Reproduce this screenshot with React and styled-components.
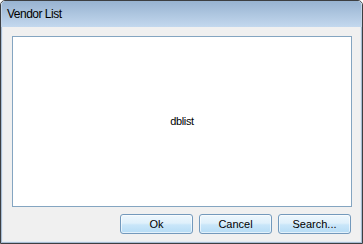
import React from 'react';
import styled, { createGlobalStyle } from 'styled-components';

const GlobalStyle = createGlobalStyle`
  html, body {
    margin: 0;
    padding: 0;
    background: #ffffff;
  }
  * {
    box-sizing: border-box;
  }
`;

const Window = styled.div`
  width: 363px;
  height: 244px;
  display: flex;
  flex-direction: column;
  border: 1px solid #3d3f42;
  border-radius: 5px 5px 0 0;
  overflow: hidden;
  font-family: "Liberation Sans", Arial, sans-serif;
  font-size: 11px;
  color: #000000;
`;

const TitleBar = styled.div`
  height: 26px;
  flex: none;
  display: flex;
  align-items: center;
  padding: 0 0 1px 5px;
  background: linear-gradient(#98b3d1, #c3d8ee);
  border-left: 1px solid #c2d4e8;
  border-right: 1px solid #c2d4e8;
  border-radius: 4px 4px 0 0;
`;

const Title = styled.span`
  font-size: 12px;
  letter-spacing: -0.5px;
`;

const Body = styled.div`
  flex: 1;
  display: flex;
  flex-direction: column;
  background: #f0f0f0;
  border: 1px solid #a8bdd4;
  border-top: none;
  box-shadow: inset 1px 0 0 #e4ebf3, inset -1px 0 0 #e4ebf3, inset 0 -1px 0 #e4ebf3;
  padding: 9px 9px 8px 10px;
`;

const ListPanel = styled.div`
  flex: 1;
  display: flex;
  align-items: center;
  justify-content: center;
  background: #ffffff;
  border: 1px solid #84a5c1;
  padding-bottom: 1px;
`;

const ListLabel = styled.span`
  font-size: 11px;
  letter-spacing: -0.4px;
`;

const ButtonRow = styled.div`
  display: flex;
  justify-content: flex-end;
  gap: 6px;
  margin-top: 7px;
  padding-right: 1px;
`;

const Button = styled.button`
  width: 73px;
  height: 20px;
  padding: 0;
  font-family: "Liberation Sans", Arial, sans-serif;
  font-size: 11px;
  color: #000000;
  border: 1px solid #7399bc;
  border-radius: 3px;
  background: linear-gradient(#eef7fd 0%, #dff0fb 45%, #c9e6f9 55%, #b6dcf5 100%);
  box-shadow: inset 0 0 0 1px rgba(255, 255, 255, 0.6);
  cursor: default;
`;

export default function App() {
  return (
    <>
      <GlobalStyle />
      <Window>
        <TitleBar>
          <Title>Vendor List</Title>
        </TitleBar>
        <Body>
          <ListPanel>
            <ListLabel>dblist</ListLabel>
          </ListPanel>
          <ButtonRow>
            <Button>Ok</Button>
            <Button>Cancel</Button>
            <Button>Search...</Button>
          </ButtonRow>
        </Body>
      </Window>
    </>
  );
}
